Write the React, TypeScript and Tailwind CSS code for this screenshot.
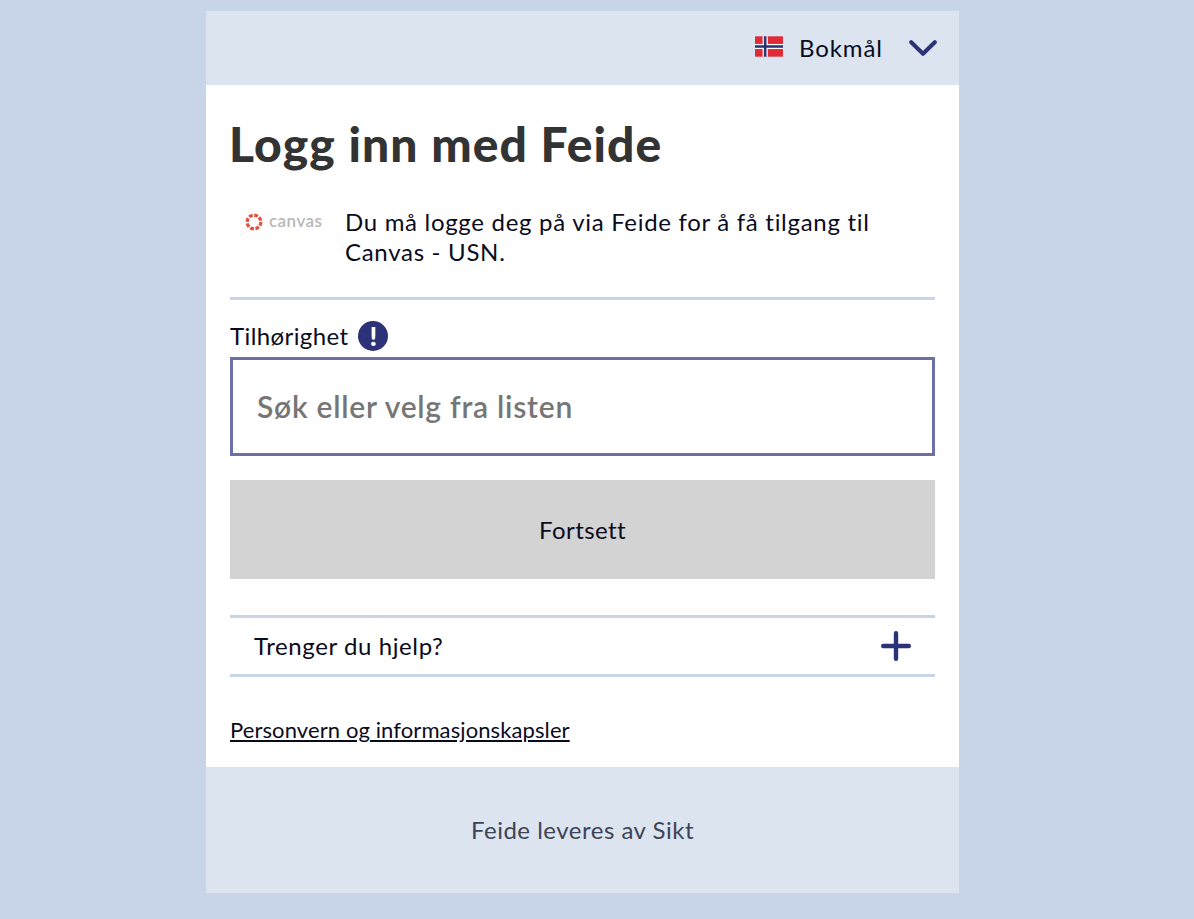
export default function App() {
  return (
    <div className="min-h-[919px] bg-[#c8d5e9] pt-[11px] font-['Lato','Liberation_Sans',sans-serif] text-[#0b0b1e]">
      <div className="w-[753px] ml-[206px] flex flex-col">

        {/* Language picker */}
        <div className="h-[74px] bg-[#dce4f0] flex items-center justify-end pr-[22px]">
          <svg width="28" height="21" viewBox="0 0 22 16" className="mr-4 mb-1">
            <rect width="22" height="16" fill="#e02a36" />
            <rect x="6" width="4" height="16" fill="#fff" />
            <rect y="6" width="22" height="4" fill="#fff" />
            <rect x="7" width="2" height="16" fill="#2b3270" />
            <rect y="7" width="22" height="2" fill="#2b3270" />
          </svg>
          <span className="text-[24px] w-[83px] tracking-[0.9px] whitespace-nowrap">Bokmål</span>
          <svg width="28" height="17" viewBox="0 0 28 17" className="ml-[27px]">
            <path d="M2.2 2.2 L14 13.8 L25.8 2.2" fill="none" stroke="#2b3277" strokeWidth="4" strokeLinecap="round" strokeLinejoin="round" />
          </svg>
        </div>

        {/* Main */}
        <div className="h-[682px] bg-white px-6 flex flex-col">
          <h1 className="mt-[31px] -ml-[1px] text-[48px] leading-[56px] font-black text-[#333333] tracking-[1.1px] whitespace-nowrap">Logg inn med Feide</h1>

          <div className="mt-[36px] flex h-[92px] border-b-[3px] border-[#c8d5e9]">
            <div className="w-[115px] shrink-0 pl-4 pt-[4px] flex items-start">
              <svg width="18" height="18" viewBox="0 0 18 18" className="mt-[1px] -ml-[1px]">
                <circle cx="9" cy="9" r="6.8" fill="none" stroke="#e2513f" strokeWidth="3.4" strokeDasharray="3.8 1.54" />
                <circle cx="9" cy="9" r="4.6" fill="none" stroke="#fff" strokeWidth="1" />
              </svg>
              <span className="ml-[6px] text-[17px] leading-[18px] font-semibold text-[#b8b8b8] tracking-[0.45px]">canvas</span>
            </div>
            <p className="text-[24px] leading-[30px] w-[560px] -mt-[1px] tracking-[0.7px]">Du må logge deg på via Feide for å få tilgang til Canvas - USN.</p>
          </div>

          <div className="mt-[21px] h-[30px] flex items-center">
            <span className="text-[24px] tracking-[0.4px]">Tilhørighet</span>
            <span className="ml-[10px] w-[30px] h-[30px] rounded-full bg-[#2b3277] text-white flex items-center justify-center text-[27px] font-black">!</span>
          </div>

          <div className="mt-[6px] h-[99px] border-[3px] border-[#6b70a8] flex items-center pl-6">
            <span className="text-[30px] font-semibold text-[#767676] tracking-[0.75px]">Søk eller velg fra listen</span>
          </div>

          <button className="mt-6 h-[99px] bg-[#d3d3d3] text-[24px] tracking-[0.4px]">Fortsett</button>

          <div className="mt-9 h-[62px] border-y-[3px] border-[#c8d5e9] flex items-center justify-between pl-6 pr-[24px]">
            <span className="text-[24px] tracking-[0.6px]">Trenger du hjelp?</span>
            <svg width="30" height="30" viewBox="0 0 30 30">
              <path d="M15 2.2 V27.8 M2.2 15 H27.8" stroke="#2b3277" strokeWidth="4.4" strokeLinecap="round" />
            </svg>
          </div>

          <a className="mt-[39px] text-[22px] leading-7 underline self-start tracking-[0.1px] whitespace-nowrap">Personvern og informasjonskapsler</a>
        </div>

        {/* Footer */}
        <div className="h-[126px] bg-[#dce4f0] flex items-center justify-center text-[24px] text-[#3d4356] tracking-[0.5px]">
          Feide leveres av Sikt
        </div>
      </div>
    </div>
  );
}
